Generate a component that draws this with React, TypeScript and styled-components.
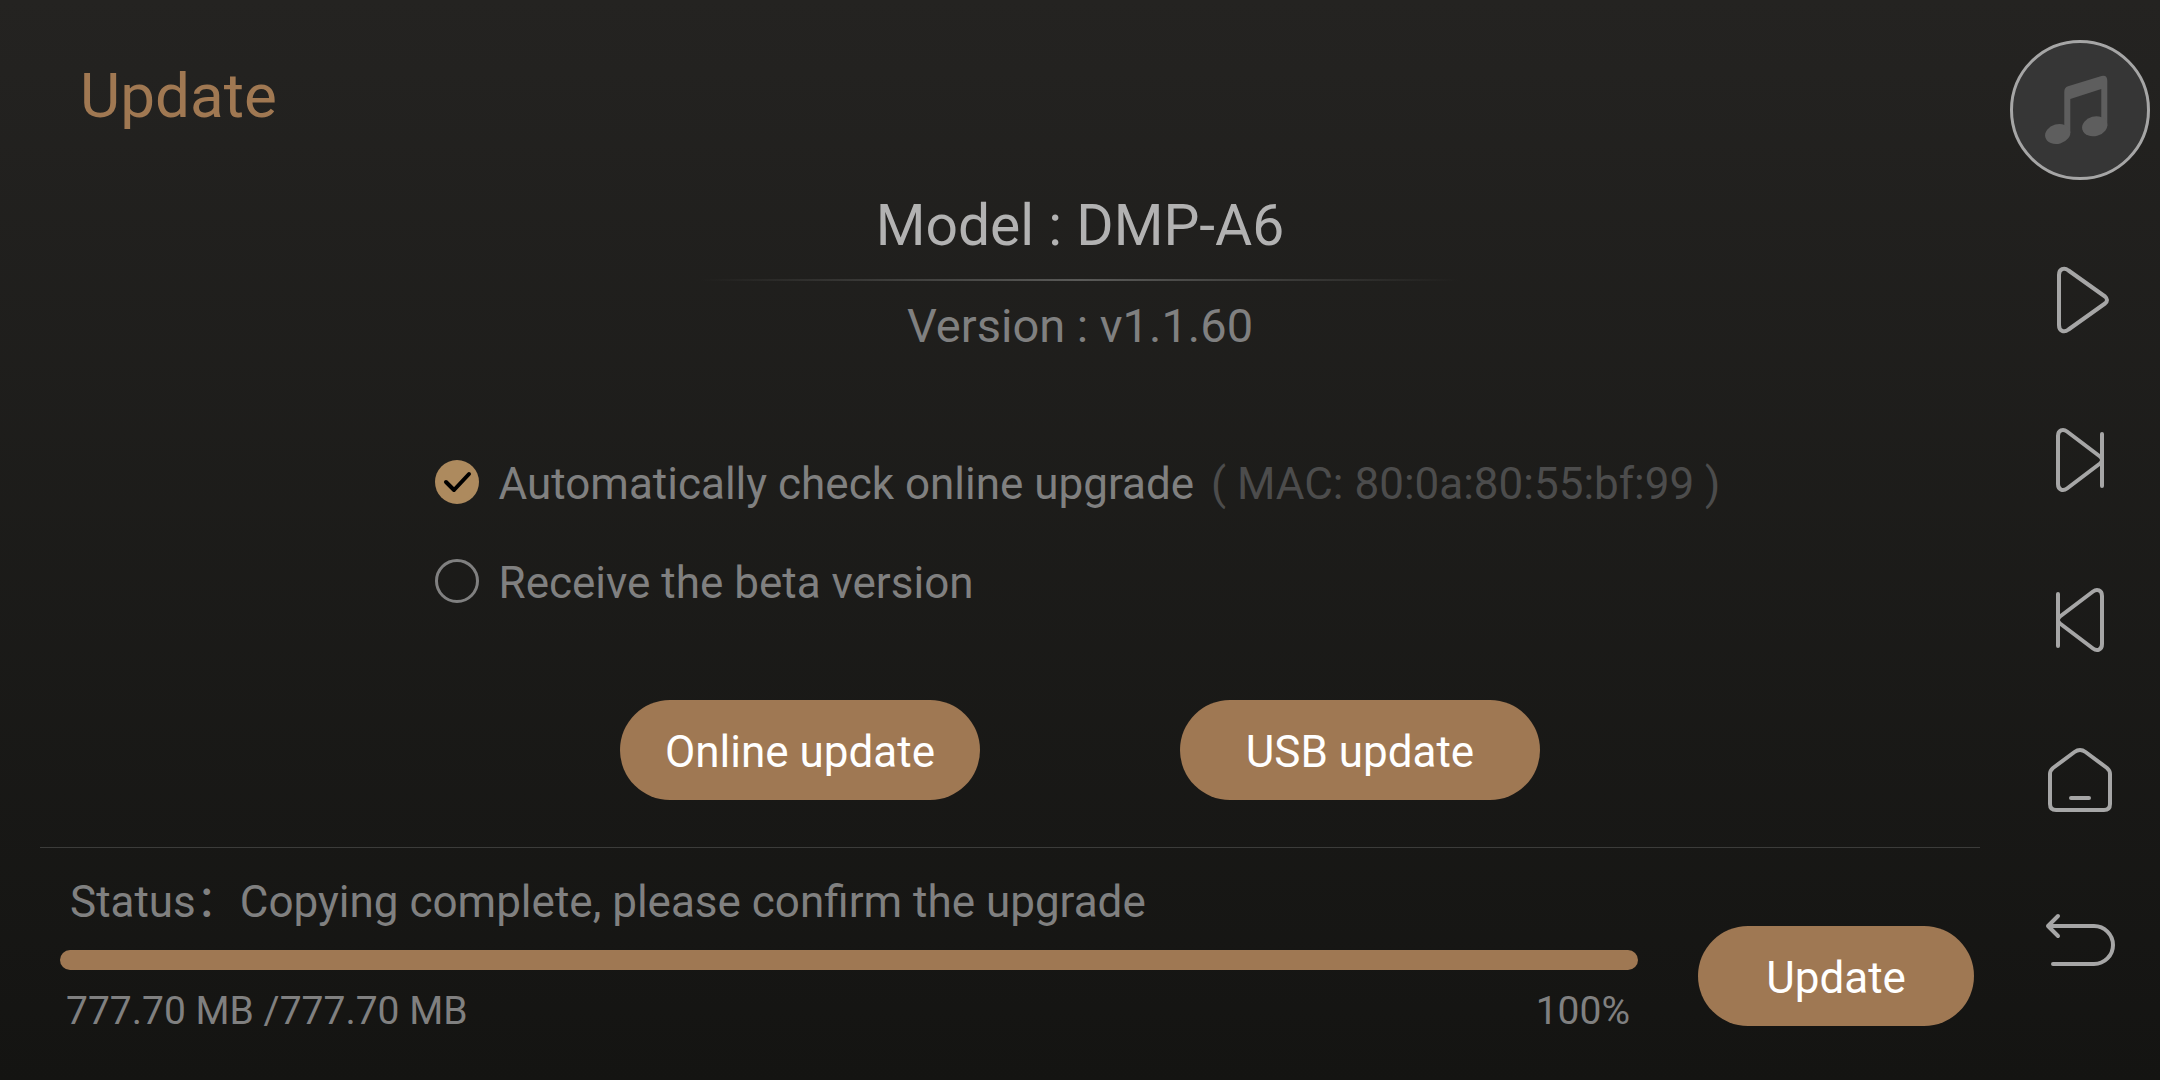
import React, { useState } from "react";
import styled, { createGlobalStyle } from "styled-components";

const color = {
  accent: "#9f7853",
  tick: "#ad8a5e",
  title: "#a07852",
  strong: "#b2b2b2",
  text: "#808080",
  faint: "#4c4c4c",
  icon: "#a6a6a6",
  rule: "#3c3c3a",
};

const GlobalStyle = createGlobalStyle`
  *, *::before, *::after { box-sizing: border-box; }
  html, body { margin: 0; min-height: 100%; background: #141412; }
  body, button, input { font-family: Roboto, "Noto Sans CJK SC", sans-serif; }
`;

const Screen = styled.div`
  display: grid;
  grid-template-columns: minmax(0, 1fr) 160px;
  min-height: 100vh;
  background: linear-gradient(#242321, #141412);
  color: ${color.text};
`;

const Main = styled.main`
  display: flex;
  flex-direction: column;
`;

const Title = styled.h1`
  margin: 0;
  padding: 58px 80px 0;
  font-size: 62px;
  font-weight: 400;
  line-height: 76px;
  color: ${color.title};
`;

const Centered = styled.section`
  display: flex;
  flex-direction: column;
  align-items: center;
  padding-left: 160px;
`;

const Model = styled.h2`
  margin: 54px 0 0;
  font-size: 57px;
  font-weight: 400;
  line-height: 76px;
  color: ${color.strong};
`;

const Glow = styled.hr`
  width: 760px;
  max-width: 100%;
  height: 2px;
  margin: 15px 0;
  border: 0;
  background: linear-gradient(90deg, transparent, #5a5a58, transparent);
`;

const Version = styled.p`
  margin: 0;
  font-size: 47px;
  line-height: 60px;
`;

const Options = styled.div`
  display: flex;
  flex-direction: column;
  gap: 35px;
  margin-top: 94px;
  padding-right: 5px;
`;

const Option = styled.label`
  display: flex;
  align-items: center;
  gap: 20px;
  font-size: 44px;
  line-height: 60px;
`;

const OptionText = styled.span`
  padding-top: 4px;
`;

const TickArea = styled.span`
  display: grid;
  flex: none;
  width: 44px;
  height: 44px;

  > * { grid-area: 1 / 1; }
`;

const TickInput = styled.input`
  appearance: none;
  width: 44px;
  height: 44px;
  margin: 0;
  border: 3px solid ${color.text};
  border-radius: 50%;

  &:checked {
    border: 0;
    background: ${color.tick};
  }
`;

const TickMark = styled.svg`
  pointer-events: none;
  fill: none;
  stroke: #000;
  stroke-width: 4;
  stroke-linecap: round;
  stroke-linejoin: round;
`;

const Mac = styled.span`
  margin-left: 6px;
  color: ${color.faint};
`;

const Actions = styled.div`
  display: flex;
  flex-wrap: wrap;
  gap: 40px 200px;
  margin-top: 87px;
`;

const PillButton = styled.button<{ $width: number }>`
  flex: none;
  width: ${(p) => p.$width}px;
  height: 100px;
  padding: 3px 0 0;
  border: 0;
  border-radius: 50px;
  background: ${color.accent};
  color: #fff;
  font-size: 44px;
  line-height: 60px;
  cursor: pointer;
`;

const Footer = styled.footer`
  display: flex;
  align-items: center;
  gap: 60px;
  margin: 47px 20px 0 40px;
  padding: 24px 6px 0 20px;
  border-top: 1px solid ${color.rule};
`;

const Progress = styled.div`
  flex: 1;
  min-width: 0;
`;

const Status = styled.p`
  margin: 0;
  padding-left: 10px;
  font-size: 44px;
  line-height: 60px;
`;

const Track = styled.div`
  height: 20px;
  margin: 18px 0 17px;
  border-radius: 10px;
  overflow: hidden;
  background: #333331;
`;

const Fill = styled.div`
  height: 100%;
  background: ${color.accent};
`;

const Figures = styled.div`
  display: flex;
  justify-content: space-between;
  padding: 0 8px 0 6px;
  font-size: 39px;
  line-height: 48px;
`;

const ConfirmArea = styled.div`
  padding-top: 45px;
`;

const Rail = styled.nav`
  display: flex;
  flex-direction: column;
  align-items: center;
  padding-top: 40px;
`;

const Cover = styled.button`
  width: 140px;
  height: 140px;
  margin-bottom: 40px;
  padding: 0;
  border: 3px solid ${color.icon};
  border-radius: 50%;
  background: #363636;
  cursor: pointer;
`;

const CoverArt = styled.svg`
  display: block;
  fill: #5e5e5e;
`;

const RailButton = styled.button`
  display: grid;
  place-items: center;
  width: 160px;
  height: 160px;
  padding: 0;
  border: 0;
  background: none;
  cursor: pointer;
`;

const RailIcon = styled.svg`
  fill: none;
  stroke: ${color.icon};
  stroke-width: 4;
  stroke-linecap: round;
  stroke-linejoin: round;
`;

const railItems = [
  {
    label: "Play",
    d: "M19 15C19 9 24 7 28.500 10.500L65 36.500Q69 40 65 43.500L28.500 69.500C24 73 19 71 19 65Z",
  },
  {
    label: "Next",
    d: "M18 16C18 10 23 8.500 27 11.500L60 36.500Q64 40 60 43.500L27 68.500C23 71.500 18 70 18 64ZM62 14V66",
  },
  {
    label: "Previous",
    d: "M62 16C62 10 57 8.500 53 11.500L20 36.500Q16 40 20 43.500L53 68.500C57 71.500 62 70 62 64ZM18 14V66",
  },
  {
    label: "Home",
    d: "M34.500 12Q40 8 45.500 12L67 28Q70 30.500 70 34V64Q70 70 64 70H16Q10 70 10 64V34Q10 30.500 13 28ZM31 58H49",
  },
  {
    label: "Back",
    d: "M18 16L8 26L18 36M8 26H54A19 19 0 0 1 54 64H13",
  },
];

type TickProps = {
  id: string;
  checked: boolean;
  onChange: (value: boolean) => void;
};

function Tick({ id, checked, onChange }: TickProps) {
  return (
    <TickArea>
      <TickInput
        id={id}
        type="checkbox"
        checked={checked}
        onChange={(e) => onChange(e.target.checked)}
      />
      {checked && (
        <TickMark width="44" height="44" viewBox="0 0 44 44" aria-hidden="true">
          <path d="M11 22L19 30L34 14" />
        </TickMark>
      )}
    </TickArea>
  );
}

export default function App() {
  const [auto, setAuto] = useState(true);
  const [beta, setBeta] = useState(false);
  const percent = 100;

  return (
    <>
      <GlobalStyle />
      <Screen>
        <Main>
          <Title>Update</Title>
          <Centered>
            <Model>Model : DMP-A6</Model>
            <Glow />
            <Version>Version : v1.1.60</Version>
            <Options>
              <Option htmlFor="auto">
                <Tick id="auto" checked={auto} onChange={setAuto} />
                <OptionText>
                  Automatically check online upgrade{" "}
                  <Mac>( MAC: 80:0a:80:55:bf:99 )</Mac>
                </OptionText>
              </Option>
              <Option htmlFor="beta">
                <Tick id="beta" checked={beta} onChange={setBeta} />
                <OptionText>Receive the beta version</OptionText>
              </Option>
            </Options>
            <Actions>
              <PillButton type="button" $width={360}>Online update</PillButton>
              <PillButton type="button" $width={360}>USB update</PillButton>
            </Actions>
          </Centered>
          <Footer>
            <Progress>
              <Status>Status：Copying complete, please confirm the upgrade</Status>
              <Track
                role="progressbar"
                aria-label="Copy progress"
                aria-valuenow={percent}
                aria-valuemin={0}
                aria-valuemax={100}
              >
                <Fill style={{ width: `${percent}%` }} />
              </Track>
              <Figures>
                <span>777.70 MB /777.70 MB</span>
                <span>{percent}%</span>
              </Figures>
            </Progress>
            <ConfirmArea>
              <PillButton type="button" $width={276}>Update</PillButton>
            </ConfirmArea>
          </Footer>
        </Main>
        <Rail aria-label="Player">
          <Cover type="button" aria-label="Now playing">
            <CoverArt width="134" height="134" viewBox="3 3 134 134" aria-hidden="true">
              <path d="M54.300 93V51.500Q54.300 47.500 58 46.200L91.500 35.900Q97.300 34.500 97.300 41V86H91.300V49L60.300 59V93Z" />
              <ellipse cx="47.700" cy="94" rx="12.800" ry="9.800" transform="rotate(-15 47.700 94)" />
              <ellipse cx="84.700" cy="86.300" rx="12.800" ry="9.800" transform="rotate(-15 84.700 86.300)" />
            </CoverArt>
          </Cover>
          {railItems.map((item) => (
            <RailButton key={item.label} type="button" aria-label={item.label}>
              <RailIcon width="80" height="80" viewBox="0 0 80 80" aria-hidden="true">
                <path d={item.d} />
              </RailIcon>
            </RailButton>
          ))}
        </Rail>
      </Screen>
    </>
  );
}
